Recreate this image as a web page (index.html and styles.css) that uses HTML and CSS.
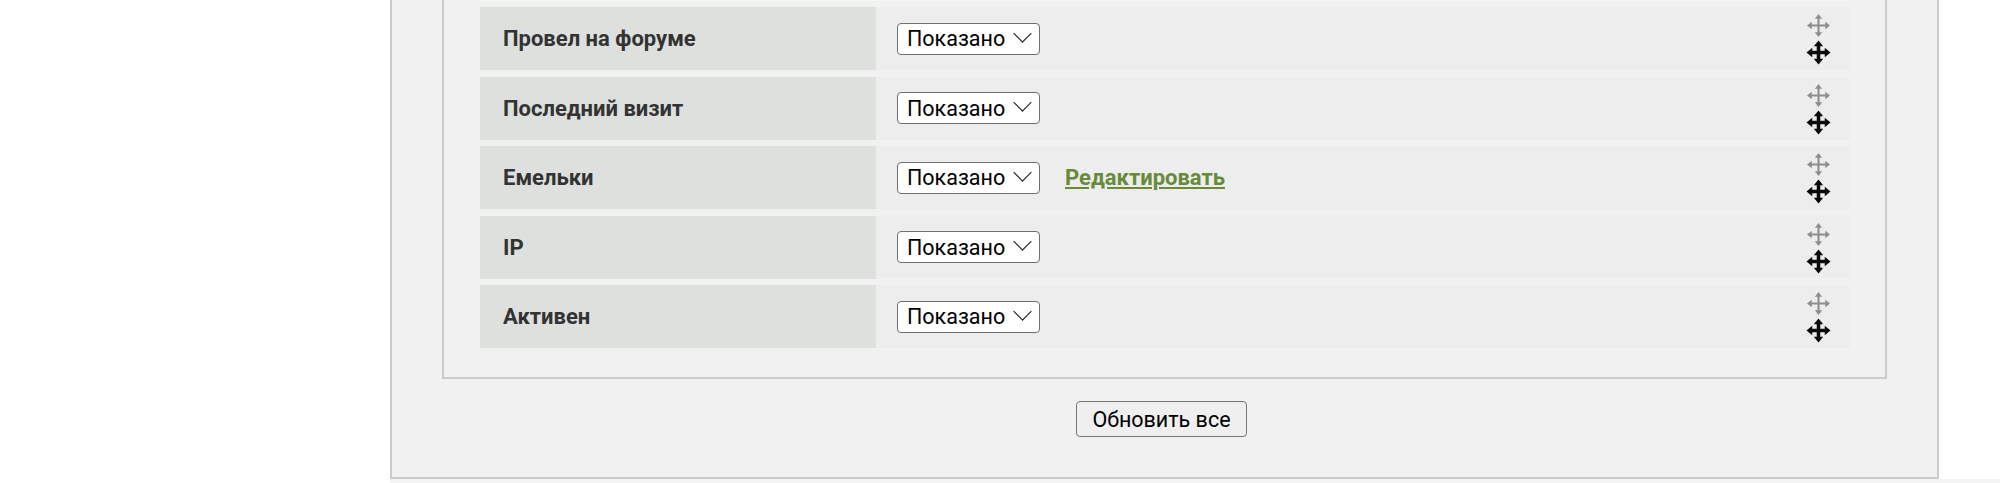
FILE: index.html
```html
<!DOCTYPE html>
<html lang="ru">
<head>
    <meta charset="UTF-8">
    <title>Поля профиля</title>
    <link rel="stylesheet" href="styles.css">
</head>
<body>
    <form class="panel">
        <div class="fields">
            <div class="row-prev"></div>
            <div class="row">
                <div class="row-label">Провел на форуме</div>
                <div class="row-value">
                    <span class="select-wrap"><select><option>Показано</option><option>Скрыто</option></select></span>
                </div>
                <div class="row-drag">
                    <svg class="drag drag-light" viewBox="0 0 24 24"><path d="M12 4v16M4 12h16"/><path class="head" d="M12 1l-3.5 4.5h7zM12 23l-3.5-4.5h7zM1 12l4.5-3.5v7zM23 12l-4.5-3.5v7z"/></svg>
                    <svg class="drag drag-dark" viewBox="0 0 24 24"><path d="M12 4v16M4 12h16"/><path class="head" d="M12 0.5l-4.5 5.5h9zM12 23.5l-4.5-5.5h9zM0.5 12l5.5-4.5v9zM23.5 12l-5.5-4.5v9z"/></svg>
                </div>
            </div>
            <div class="row">
                <div class="row-label">Последний визит</div>
                <div class="row-value">
                    <span class="select-wrap"><select><option>Показано</option><option>Скрыто</option></select></span>
                </div>
                <div class="row-drag">
                    <svg class="drag drag-light" viewBox="0 0 24 24"><path d="M12 4v16M4 12h16"/><path class="head" d="M12 1l-3.5 4.5h7zM12 23l-3.5-4.5h7zM1 12l4.5-3.5v7zM23 12l-4.5-3.5v7z"/></svg>
                    <svg class="drag drag-dark" viewBox="0 0 24 24"><path d="M12 4v16M4 12h16"/><path class="head" d="M12 0.5l-4.5 5.5h9zM12 23.5l-4.5-5.5h9zM0.5 12l5.5-4.5v9zM23.5 12l-5.5-4.5v9z"/></svg>
                </div>
            </div>
            <div class="row">
                <div class="row-label">Емельки</div>
                <div class="row-value">
                    <span class="select-wrap"><select><option>Показано</option><option>Скрыто</option></select></span>
                    <a href="#" class="edit">Редактировать</a>
                </div>
                <div class="row-drag">
                    <svg class="drag drag-light" viewBox="0 0 24 24"><path d="M12 4v16M4 12h16"/><path class="head" d="M12 1l-3.5 4.5h7zM12 23l-3.5-4.5h7zM1 12l4.5-3.5v7zM23 12l-4.5-3.5v7z"/></svg>
                    <svg class="drag drag-dark" viewBox="0 0 24 24"><path d="M12 4v16M4 12h16"/><path class="head" d="M12 0.5l-4.5 5.5h9zM12 23.5l-4.5-5.5h9zM0.5 12l5.5-4.5v9zM23.5 12l-5.5-4.5v9z"/></svg>
                </div>
            </div>
            <div class="row">
                <div class="row-label">IP</div>
                <div class="row-value">
                    <span class="select-wrap"><select><option>Показано</option><option>Скрыто</option></select></span>
                </div>
                <div class="row-drag">
                    <svg class="drag drag-light" viewBox="0 0 24 24"><path d="M12 4v16M4 12h16"/><path class="head" d="M12 1l-3.5 4.5h7zM12 23l-3.5-4.5h7zM1 12l4.5-3.5v7zM23 12l-4.5-3.5v7z"/></svg>
                    <svg class="drag drag-dark" viewBox="0 0 24 24"><path d="M12 4v16M4 12h16"/><path class="head" d="M12 0.5l-4.5 5.5h9zM12 23.5l-4.5-5.5h9zM0.5 12l5.5-4.5v9zM23.5 12l-5.5-4.5v9z"/></svg>
                </div>
            </div>
            <div class="row">
                <div class="row-label">Активен</div>
                <div class="row-value">
                    <span class="select-wrap"><select><option>Показано</option><option>Скрыто</option></select></span>
                </div>
                <div class="row-drag">
                    <svg class="drag drag-light" viewBox="0 0 24 24"><path d="M12 4v16M4 12h16"/><path class="head" d="M12 1l-3.5 4.5h7zM12 23l-3.5-4.5h7zM1 12l4.5-3.5v7zM23 12l-4.5-3.5v7z"/></svg>
                    <svg class="drag drag-dark" viewBox="0 0 24 24"><path d="M12 4v16M4 12h16"/><path class="head" d="M12 0.5l-4.5 5.5h9zM12 23.5l-4.5-5.5h9zM0.5 12l5.5-4.5v9zM23.5 12l-5.5-4.5v9z"/></svg>
                </div>
            </div>
        </div>
        <div class="actions">
            <button type="submit" class="b">Обновить все</button>
        </div>
    </form>
    <div class="below"></div>
</body>
</html>
```

FILE: styles.css
```css
body {
    margin: 0;
    padding: 0;
    background: #fff;
    font-family: Roboto, "Liberation Sans", Arial, sans-serif;
}
.panel {
    box-sizing: border-box;
    width: 1549px;
    margin-left: 390px;
    padding: 0 0 40px 0;
    background: #f1f1f1;
    border: 2px solid #cbcbcb;
    border-top: 0;
}
.fields {
    box-sizing: border-box;
    width: 1445px;
    margin-left: 50px;
    padding: 0 35px 29px 36px;
    display: flex;
    flex-direction: column;
    gap: 6.5px;
    border: 2px solid #cbcbcb;
    border-top: 0;
}
.row-prev {
    height: 0.5px;
    background: #f6f6f6;
}
.row {
    display: flex;
    height: 63px;
    background: #ededed;
}
.row-label {
    box-sizing: border-box;
    width: 396px;
    padding-left: 23px;
    display: flex;
    align-items: center;
    background: #dee0de;
    color: #333;
    font-weight: bold;
    font-size: 22px;
}
.row-value {
    flex: 1;
    display: flex;
    align-items: center;
    gap: 25px;
    padding-left: 21px;
}
.select-wrap {
    position: relative;
    display: flex;
}
.select-wrap::after {
    content: "";
    position: absolute;
    right: 11px;
    top: 4px;
    width: 12px;
    height: 12px;
    border-right: 1.5px solid #111;
    border-bottom: 1.5px solid #111;
    transform: rotate(45deg);
    pointer-events: none;
}
.select-wrap select {
    box-sizing: border-box;
    width: 143px;
    height: 32px;
    padding: 0 0 0 9px;
    appearance: none;
    font-family: Roboto, "Liberation Sans", Arial, sans-serif;
    font-size: 21.5px;
    color: #000;
    background: #fff;
    border: 1px solid #6f6f6f;
    border-radius: 4px;
}
.edit {
    color: #678a3b;
    font-weight: bold;
    font-size: 22px;
    text-decoration: underline;
}
.row-drag {
    display: flex;
    flex-direction: column;
    padding: 6px 19px 0 0;
    gap: 2px;
}
.drag {
    width: 25px;
    height: 25px;
    fill: none;
    filter: blur(0.4px);
}
.drag-light path {
    stroke: #8e8e8e;
    stroke-width: 2;
}
.drag-light .head {
    fill: #8e8e8e;
    stroke: none;
}
.drag-dark path {
    stroke: #0a0a0a;
    stroke-width: 3.4;
}
.drag-dark .head {
    fill: #0a0a0a;
    stroke: none;
}
.actions {
    display: flex;
    justify-content: center;
    padding: 22px 6px 0 0;
}
.b {
    box-sizing: border-box;
    width: 171px;
    height: 36px;
    font-family: Roboto, "Liberation Sans", Arial, sans-serif;
    font-size: 21.5px;
    color: #000;
    background: #efefef;
    border: 1px solid #767676;
    border-radius: 4px;
    cursor: pointer;
}
.below {
    height: 6px;
    margin-left: 390px;
    background: #f4f4f4;
}
```
